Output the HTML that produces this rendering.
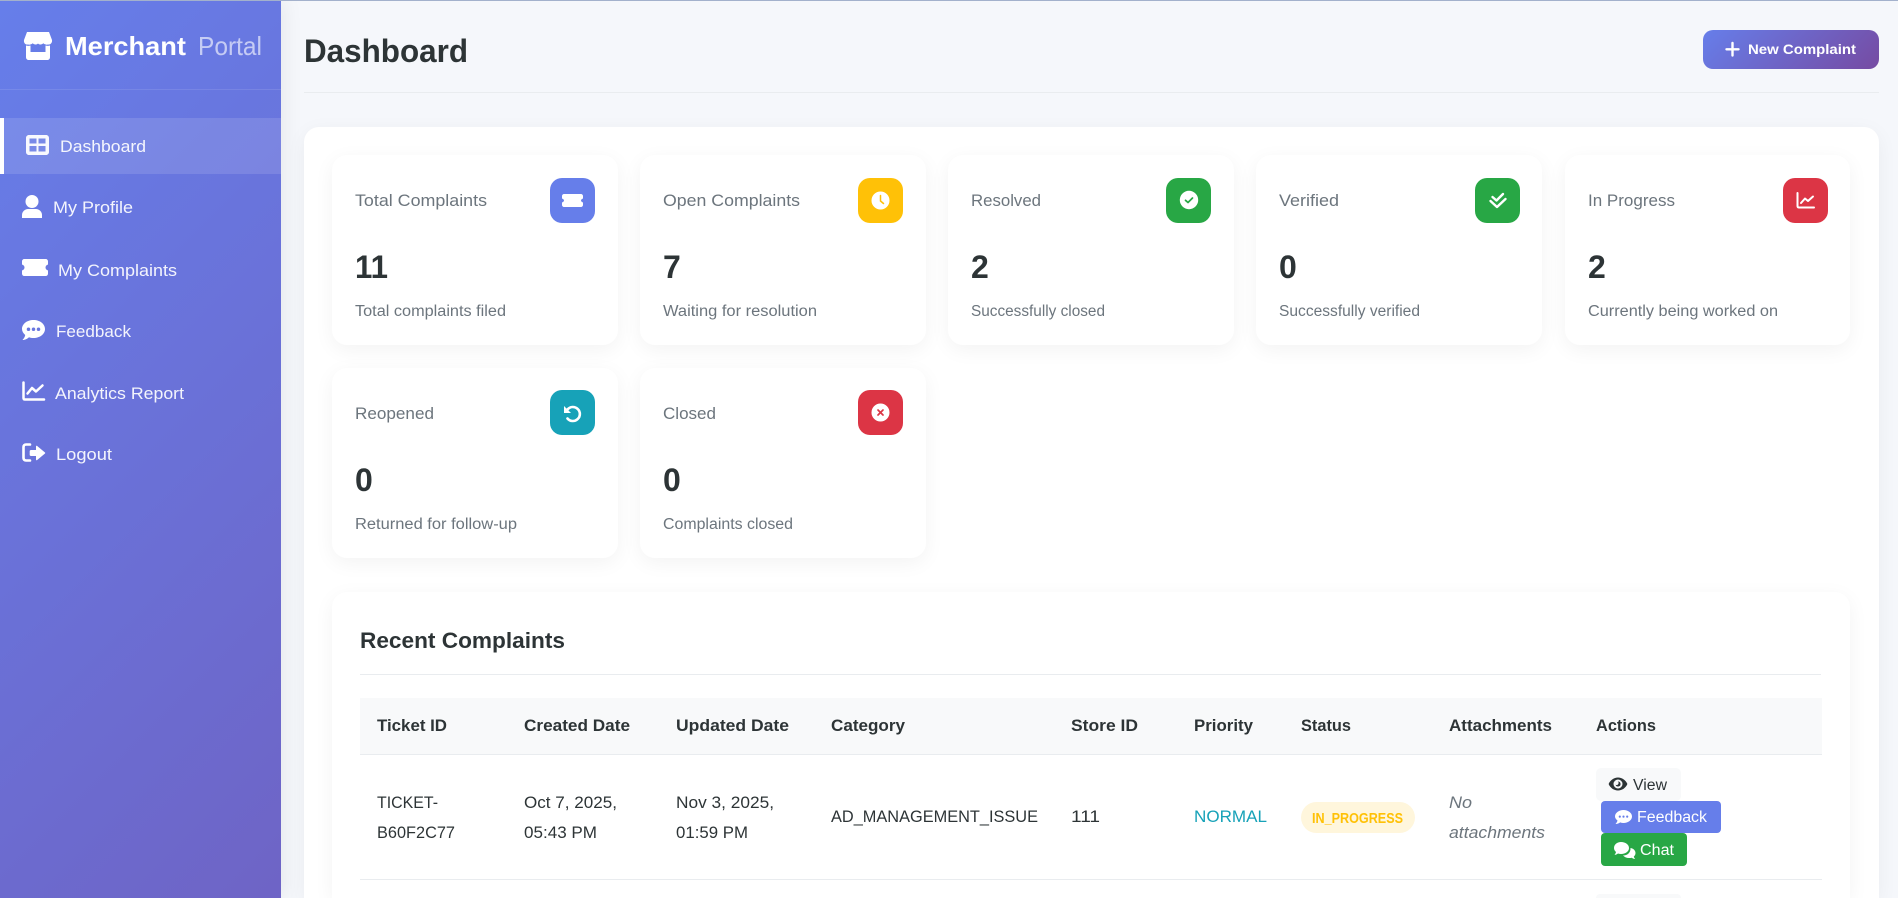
<!DOCTYPE html>
<html lang="en"><head><meta charset="utf-8"><title>Merchant Portal Dashboard</title>
<style>
html,body{margin:0;padding:0;width:1898px;height:898px;overflow:hidden;background:#f5f7fb;font-family:"Liberation Sans",Arial,sans-serif}
#page{position:relative;width:1898px;height:898px;overflow:hidden;background:#f5f7fb;contain:paint}
.a{position:absolute}
#side{left:0;top:0;width:281px;height:898px;background:linear-gradient(135deg,#667eea,#764ba2) 0 0/281px 2030px no-repeat;box-shadow:2px 0 20px rgba(0,0,0,.07)}
.card{position:absolute;width:286px;height:190px;background:#fff;border-radius:15px;box-shadow:0 5px 20px rgba(0,0,0,.05)}
.ic{position:absolute;width:45px;height:45px;border-radius:12px}
svg{display:block}
svg text{font-family:"Liberation Sans",Arial,sans-serif}
.lb{font-size:17px;fill:#6c757d}
.val{font-size:32px;font-weight:700;fill:#2d3436}
.ds{font-size:15.5px;fill:#6c757d}
.nav{font-size:17px;fill:rgba(255,255,255,.92)}
.th{font-size:17px;font-weight:700;fill:#2d3436}
.td{font-size:17px;fill:#2d3436}
.btn{font-size:15.5px}
</style></head><body>
<div id="page">
<div class="a" id="side"></div>
<div class="a" style="left:0;top:118px;width:281px;height:56px;background:rgba(255,255,255,.12)"></div>
<div class="a" style="left:0;top:118px;width:4px;height:56px;background:#fff"></div>
<div class="a" style="left:0;top:89px;width:281px;height:1px;background:rgba(255,255,255,.1)"></div>
<div class="a" style="left:304px;top:92px;width:1575px;height:1px;background:#e9ecef"></div>
<div class="a" style="left:1703px;top:30px;width:176px;height:39px;border-radius:10px;background:linear-gradient(135deg,#667eea,#764ba2)"></div>
<div class="a" style="left:304px;top:127px;width:1575px;height:771px;background:#fff;border-radius:15px 15px 0 0;box-shadow:0 5px 20px rgba(0,0,0,.05);clip-path:inset(-30px -30px 0 -30px)"></div>
<div class="card" style="left:332px;top:155px"></div>
<div class="card" style="left:640px;top:155px"></div>
<div class="card" style="left:948px;top:155px"></div>
<div class="card" style="left:1256px;top:155px"></div>
<div class="card" style="left:1565px;top:155px;width:285px"></div>
<div class="card" style="left:332px;top:368px"></div>
<div class="card" style="left:640px;top:368px"></div>
<div class="ic" style="left:550px;top:178px;background:#667eea"></div>
<div class="ic" style="left:858px;top:178px;background:#ffc107"></div>
<div class="ic" style="left:1166px;top:178px;background:#28a745"></div>
<div class="ic" style="left:1475px;top:178px;background:#28a745"></div>
<div class="ic" style="left:1783px;top:178px;background:#dc3545"></div>
<div class="ic" style="left:550px;top:390px;background:#17a2b8"></div>
<div class="ic" style="left:858px;top:390px;background:#dc3545"></div>
<div class="card" style="left:332px;top:592px;width:1518px;height:306px;border-radius:15px 15px 0 0;clip-path:inset(-30px -30px 0 -30px)"></div>
<div class="a" style="left:360px;top:674px;width:1461px;height:1px;background:#e9ecef"></div>
<div class="a" style="left:360px;top:698px;width:1462px;height:56px;background:#f8f9fa"></div>
<div class="a" style="left:360px;top:754px;width:1462px;height:1px;background:#e9ecef"></div>
<div class="a" style="left:360px;top:879px;width:1462px;height:1px;background:#e9ecef"></div>
<div class="a" style="left:1301px;top:802px;width:114px;height:31px;border-radius:16px;background:#fff6dc"></div>
<div class="a" style="left:1596px;top:768px;width:85px;height:33px;border-radius:5px;background:#f8f9fa"></div>
<div class="a" style="left:1601px;top:801px;width:120px;height:32px;border-radius:4px;background:#667eea"></div>
<div class="a" style="left:1601px;top:833px;width:86px;height:33px;border-radius:4px;background:#28a745"></div>
<div class="a" style="left:1596px;top:894px;width:85px;height:4px;border-radius:5px 5px 0 0;background:#f8f9fa"></div>
<div class="a" style="left:0;top:0;width:1898px;height:1px;background:#a3b1cc"></div>

<svg class="a" style="left:0;top:0" width="1898" height="898" viewBox="0 0 1898 898" xmlns="http://www.w3.org/2000/svg">
<!-- brand -->
<path fill="#fff" d="M27 32H49L52 40C52.500 43 50 45 48 44.500 46.500 45 44.500 44.500 43.300 43.300 42 44.800 39.500 45 38 43.500 36.500 45 34 44.800 32.700 43.300 31.500 44.500 29.500 45 28 44.500 25.500 45 23.500 43 24 40Z"/>
<path fill="#fff" d="M26 45.500C27.500 46 29 46 30.500 45.500V52H45.500V45.500C47 46 48.500 46 50 45.500V57C50 59 48.800 60 47 60H29C27.200 60 26 59 26 57Z"/>
<text x="65" y="55" font-size="26" font-weight="700" fill="#fff" textLength="121" lengthAdjust="spacingAndGlyphs">Merchant</text>
<text x="198" y="55" font-size="26" fill="rgba(255,255,255,.62)" textLength="64" lengthAdjust="spacingAndGlyphs">Portal</text>
<!-- nav icons -->
<path fill="#fff" fill-opacity=".95" fill-rule="evenodd" d="M29 135H46C47.700 135 49 136.300 49 138V152C49 153.700 47.700 155 46 155H29C27.300 155 26 153.700 26 152V138C26 136.300 27.300 135 29 135ZM29.500 138.500V143.500H36.500V138.500ZM38.500 138.500V143.500H45.500V138.500ZM29.500 146V151.500H36.500V146ZM38.500 146V151.500H45.500V146Z"/>
<circle cx="32" cy="201.500" r="6.500" fill="#fff"/>
<path fill="#fff" d="M22 218V215C22 211.500 25 209 28 209H36C39 209 42 211.500 42 215V218Z"/>
<path fill="#fff" d="M24.500 259H45.500C47 259 48 260 48 261.500V264.500C46.500 265 45.500 266 45.500 267.500 45.500 269 46.500 270 48 270.500V273.500C48 275 47 276 45.500 276H24.500C23 276 22 275 22 273.500V270.500C23.500 270 24.500 269 24.500 267.500 24.500 266 23.500 265 22 264.500V261.500C22 260 23 259 24.500 259Z"/>
<path fill="#fff" fill-rule="evenodd" d="M33.500 320C40 320 45 324 45 329S40 338 33.500 338C31.800 338 30.300 337.700 29 337.200 27.500 338.500 25.300 340 22.500 340 24 338.500 25 336.500 25.200 335 23.300 333.300 22 331.300 22 329 22 324 27 320 33.500 320ZM28.500 327.500A1.700 1.700 0 1 0 28.500 331 1.700 1.700 0 1 0 28.500 327.500ZM33.500 327.500A1.700 1.700 0 1 0 33.500 331 1.700 1.700 0 1 0 33.500 327.500ZM38.500 327.500A1.700 1.700 0 1 0 38.500 331 1.700 1.700 0 1 0 38.500 327.500Z"/>
<path fill="none" stroke="#fff" stroke-width="2.500" stroke-linecap="round" stroke-linejoin="round" d="M23.500 382.500V398C23.500 399 24 399.500 25 399.500H44"/>
<path fill="none" stroke="#fff" stroke-width="2.500" stroke-linecap="round" stroke-linejoin="round" d="M27.500 393.500L32 388L36 391.500L42.500 385.500"/>
<path fill="none" stroke="#fff" stroke-width="2.600" stroke-linecap="round" d="M30 444.500H26C24.500 444.500 23.500 445.500 23.500 447V458C23.500 459.500 24.500 460.500 26 460.500H30"/>
<path fill="#fff" d="M31 450H36V446.500C36 445.800 36.700 445.500 37.200 446L45 452.500C45.300 452.800 45.300 453.200 45 453.500L37.200 460C36.700 460.500 36 460.200 36 459.500V456H31C30.200 456 29.700 455.500 29.700 454.800V451.200C29.700 450.500 30.200 450 31 450Z"/>
<!-- nav text -->
<text class="nav" x="60" y="152" textLength="86" lengthAdjust="spacingAndGlyphs">Dashboard</text>
<text class="nav" x="53" y="213" textLength="80" lengthAdjust="spacingAndGlyphs">My Profile</text>
<text class="nav" x="58" y="276" textLength="119" lengthAdjust="spacingAndGlyphs">My Complaints</text>
<text class="nav" x="56" y="337" textLength="75" lengthAdjust="spacingAndGlyphs">Feedback</text>
<text class="nav" x="55" y="399" textLength="129" lengthAdjust="spacingAndGlyphs">Analytics Report</text>
<text class="nav" x="56" y="460" textLength="56" lengthAdjust="spacingAndGlyphs">Logout</text>
<!-- header -->
<text x="304" y="62" font-size="32" font-weight="700" fill="#2d3436" textLength="164" lengthAdjust="spacingAndGlyphs">Dashboard</text>
<path stroke="#fff" stroke-width="2.400" stroke-linecap="round" d="M1732.500 43V55.500M1726.500 49.300H1738.500"/>
<text x="1748" y="54" font-size="13.800" font-weight="700" fill="#fff" textLength="108" lengthAdjust="spacingAndGlyphs">New Complaint</text>
<!-- card text -->
<text class="lb" x="355" y="206" textLength="132" lengthAdjust="spacingAndGlyphs">Total Complaints</text>
<text class="val" x="355" y="278" textLength="33" lengthAdjust="spacingAndGlyphs">11</text>
<text class="ds" x="355" y="316" textLength="151" lengthAdjust="spacingAndGlyphs">Total complaints filed</text>
<text class="lb" x="663" y="206" textLength="137" lengthAdjust="spacingAndGlyphs">Open Complaints</text>
<text class="val" x="663" y="278">7</text>
<text class="ds" x="663" y="316" textLength="154" lengthAdjust="spacingAndGlyphs">Waiting for resolution</text>
<text class="lb" x="971" y="206" textLength="70" lengthAdjust="spacingAndGlyphs">Resolved</text>
<text class="val" x="971" y="278">2</text>
<text class="ds" x="971" y="316" textLength="134" lengthAdjust="spacingAndGlyphs">Successfully closed</text>
<text class="lb" x="1279" y="206" textLength="60" lengthAdjust="spacingAndGlyphs">Verified</text>
<text class="val" x="1279" y="278">0</text>
<text class="ds" x="1279" y="316" textLength="141" lengthAdjust="spacingAndGlyphs">Successfully verified</text>
<text class="lb" x="1588" y="206" textLength="87" lengthAdjust="spacingAndGlyphs">In Progress</text>
<text class="val" x="1588" y="278">2</text>
<text class="ds" x="1588" y="316" textLength="190" lengthAdjust="spacingAndGlyphs">Currently being worked on</text>
<text class="lb" x="355" y="419" textLength="79" lengthAdjust="spacingAndGlyphs">Reopened</text>
<text class="val" x="355" y="491">0</text>
<text class="ds" x="355" y="529" textLength="162" lengthAdjust="spacingAndGlyphs">Returned for follow-up</text>
<text class="lb" x="663" y="419" textLength="53" lengthAdjust="spacingAndGlyphs">Closed</text>
<text class="val" x="663" y="491">0</text>
<text class="ds" x="663" y="529" textLength="130" lengthAdjust="spacingAndGlyphs">Complaints closed</text>
<!-- card icons -->
<path fill="#fff" d="M564 194H581C582.100 194 583 194.900 583 196V198.500C581.800 199 581 199.700 581 200.500 581 201.300 581.800 202 583 202.500V205C583 206.100 582.100 207 581 207H564C562.900 207 562 206.100 562 205V202.500C563.200 202 564 201.300 564 200.500 564 199.700 563.200 199 562 198.500V196C562 194.900 562.900 194 564 194Z"/>
<circle cx="880.500" cy="200.500" r="9" fill="#fff"/><path fill="none" stroke="#ffc107" stroke-width="1.500" stroke-linecap="round" d="M880.500 195.500V201L883.500 203.500"/>
<circle cx="1189" cy="200" r="9.200" fill="#fff"/><path fill="none" stroke="#28a745" stroke-width="1.700" stroke-linecap="round" stroke-linejoin="round" d="M1185.500 200.300L1188 202.500L1192.500 198"/>
<path fill="none" stroke="#fff" stroke-width="2.400" stroke-linecap="round" stroke-linejoin="round" d="M1492.500 197L1496.500 200.500L1503 194M1490.500 201L1497 207L1505.500 199"/>
<path fill="none" stroke="#fff" stroke-width="2" stroke-linecap="round" stroke-linejoin="round" d="M1797.500 193V206C1797.500 207 1798 207.500 1799 207.500H1814"/>
<path fill="none" stroke="#fff" stroke-width="2" stroke-linecap="round" stroke-linejoin="round" d="M1801 203L1805 198.500L1808 201L1813 196.500"/>
<path fill="none" stroke="#fff" stroke-width="2.600" stroke-linecap="round" d="M567.500 409.500A7 7 0 1 1 567.500 418.500"/>
<path fill="#fff" d="M564 406V413H571Z"/>
<circle cx="880.500" cy="412.500" r="9" fill="#fff"/><path stroke="#dc3545" stroke-width="1.700" stroke-linecap="round" d="M878 410L883 415M883 410L878 415"/>
<!-- table -->
<text x="360" y="648" font-size="22.500" font-weight="700" fill="#2d3436" textLength="205" lengthAdjust="spacingAndGlyphs">Recent Complaints</text>
<text class="th" x="377" y="731" textLength="70" lengthAdjust="spacingAndGlyphs">Ticket ID</text>
<text class="th" x="524" y="731" textLength="106" lengthAdjust="spacingAndGlyphs">Created Date</text>
<text class="th" x="676" y="731" textLength="113" lengthAdjust="spacingAndGlyphs">Updated Date</text>
<text class="th" x="831" y="731" textLength="74" lengthAdjust="spacingAndGlyphs">Category</text>
<text class="th" x="1071" y="731" textLength="67" lengthAdjust="spacingAndGlyphs">Store ID</text>
<text class="th" x="1194" y="731" textLength="59" lengthAdjust="spacingAndGlyphs">Priority</text>
<text class="th" x="1301" y="731" textLength="50" lengthAdjust="spacingAndGlyphs">Status</text>
<text class="th" x="1449" y="731" textLength="103" lengthAdjust="spacingAndGlyphs">Attachments</text>
<text class="th" x="1596" y="731" textLength="60" lengthAdjust="spacingAndGlyphs">Actions</text>
<text class="td" x="377" y="808" textLength="61" lengthAdjust="spacingAndGlyphs">TICKET-</text>
<text class="td" x="377" y="838" textLength="78" lengthAdjust="spacingAndGlyphs">B60F2C77</text>
<text class="td" x="524" y="808" textLength="93" lengthAdjust="spacingAndGlyphs">Oct 7, 2025,</text>
<text class="td" x="524" y="838" textLength="73" lengthAdjust="spacingAndGlyphs">05:43 PM</text>
<text class="td" x="676" y="808" textLength="98" lengthAdjust="spacingAndGlyphs">Nov 3, 2025,</text>
<text class="td" x="676" y="838" textLength="72" lengthAdjust="spacingAndGlyphs">01:59 PM</text>
<text class="td" x="831" y="822" textLength="207" lengthAdjust="spacingAndGlyphs">AD_MANAGEMENT_ISSUE</text>
<text class="td" x="1071" y="822" textLength="29" lengthAdjust="spacingAndGlyphs">111</text>
<text class="td" x="1194" y="822" textLength="73" lengthAdjust="spacingAndGlyphs" style="fill:#17a2b8">NORMAL</text>
<text x="1312" y="823" font-size="14.500" font-weight="700" fill="#ffc107" textLength="91" lengthAdjust="spacingAndGlyphs">IN_PROGRESS</text>
<text class="td" x="1449" y="808" textLength="23" lengthAdjust="spacingAndGlyphs" font-style="italic" style="fill:#6c757d">No</text>
<text class="td" x="1449" y="838" textLength="96" lengthAdjust="spacingAndGlyphs" font-style="italic" style="fill:#6c757d">attachments</text>
<!-- buttons -->
<path fill="#2d3436" fill-rule="evenodd" d="M1618 777.500C1622 777.500 1625.500 780 1627.200 783.500 1627.300 783.800 1627.300 784.200 1627.200 784.500 1625.500 788 1622 790.500 1618 790.500S1610.500 788 1608.800 784.500C1608.700 784.200 1608.700 783.800 1608.800 783.500 1610.500 780 1614 777.500 1618 777.500ZM1618 779.500A4.500 4.500 0 1 0 1618 788.500 4.500 4.500 0 1 0 1618 779.500ZM1618 781.500A2.500 2.500 0 1 1 1615.600 784.600 1.500 1.500 0 0 0 1617.700 781.500Z"/>
<text class="btn" x="1633" y="790" fill="#2d3436" textLength="34" lengthAdjust="spacingAndGlyphs">View</text>
<path fill="#fff" fill-rule="evenodd" d="M1623.500 810C1628 810 1632 812.800 1632 816.500S1628 823 1623.500 823C1622.300 823 1621.200 822.800 1620.200 822.400 1619 823.300 1617.500 824 1615.500 824 1616.500 823 1617.300 821.600 1617.500 820.500 1616 819.300 1615 818 1615 816.500 1615 812.800 1619 810 1623.500 810ZM1619.800 815.500A1.100 1.100 0 1 0 1619.800 817.700 1.100 1.100 0 1 0 1619.800 815.500ZM1623.500 815.500A1.100 1.100 0 1 0 1623.500 817.700 1.100 1.100 0 1 0 1623.500 815.500ZM1627.200 815.500A1.100 1.100 0 1 0 1627.200 817.700 1.100 1.100 0 1 0 1627.200 815.500Z"/>
<text class="btn" x="1637" y="822" fill="#fff" textLength="70" lengthAdjust="spacingAndGlyphs">Feedback</text>
<path fill="#fff" d="M1621 842C1625.500 842 1629 844.600 1629 848S1625.500 854 1621 854C1620 854 1619 853.800 1618 853.500 1617 854.300 1615.800 854.800 1614.500 855 1615.200 854 1615.800 853 1616 852 1614.800 851 1614 849.600 1614 848 1614 844.600 1617 842 1621 842Z"/>
<path fill="#fff" d="M1630.500 848C1633.500 848.500 1635.500 850.500 1635.500 853 1635.500 854.500 1634.800 855.800 1633.800 856.500 1634 857.500 1634.600 858.300 1635.200 859 1633.800 858.900 1632.700 858.300 1631.800 857.700 1631 858 1630 858 1629 858 1626.500 858 1624.500 857 1623 855.500 1627.500 855.500 1630.800 852.500 1630.500 848Z"/>
<text class="btn" x="1640" y="855" fill="#fff" textLength="34" lengthAdjust="spacingAndGlyphs">Chat</text>
</svg>
</div>
</body></html>
